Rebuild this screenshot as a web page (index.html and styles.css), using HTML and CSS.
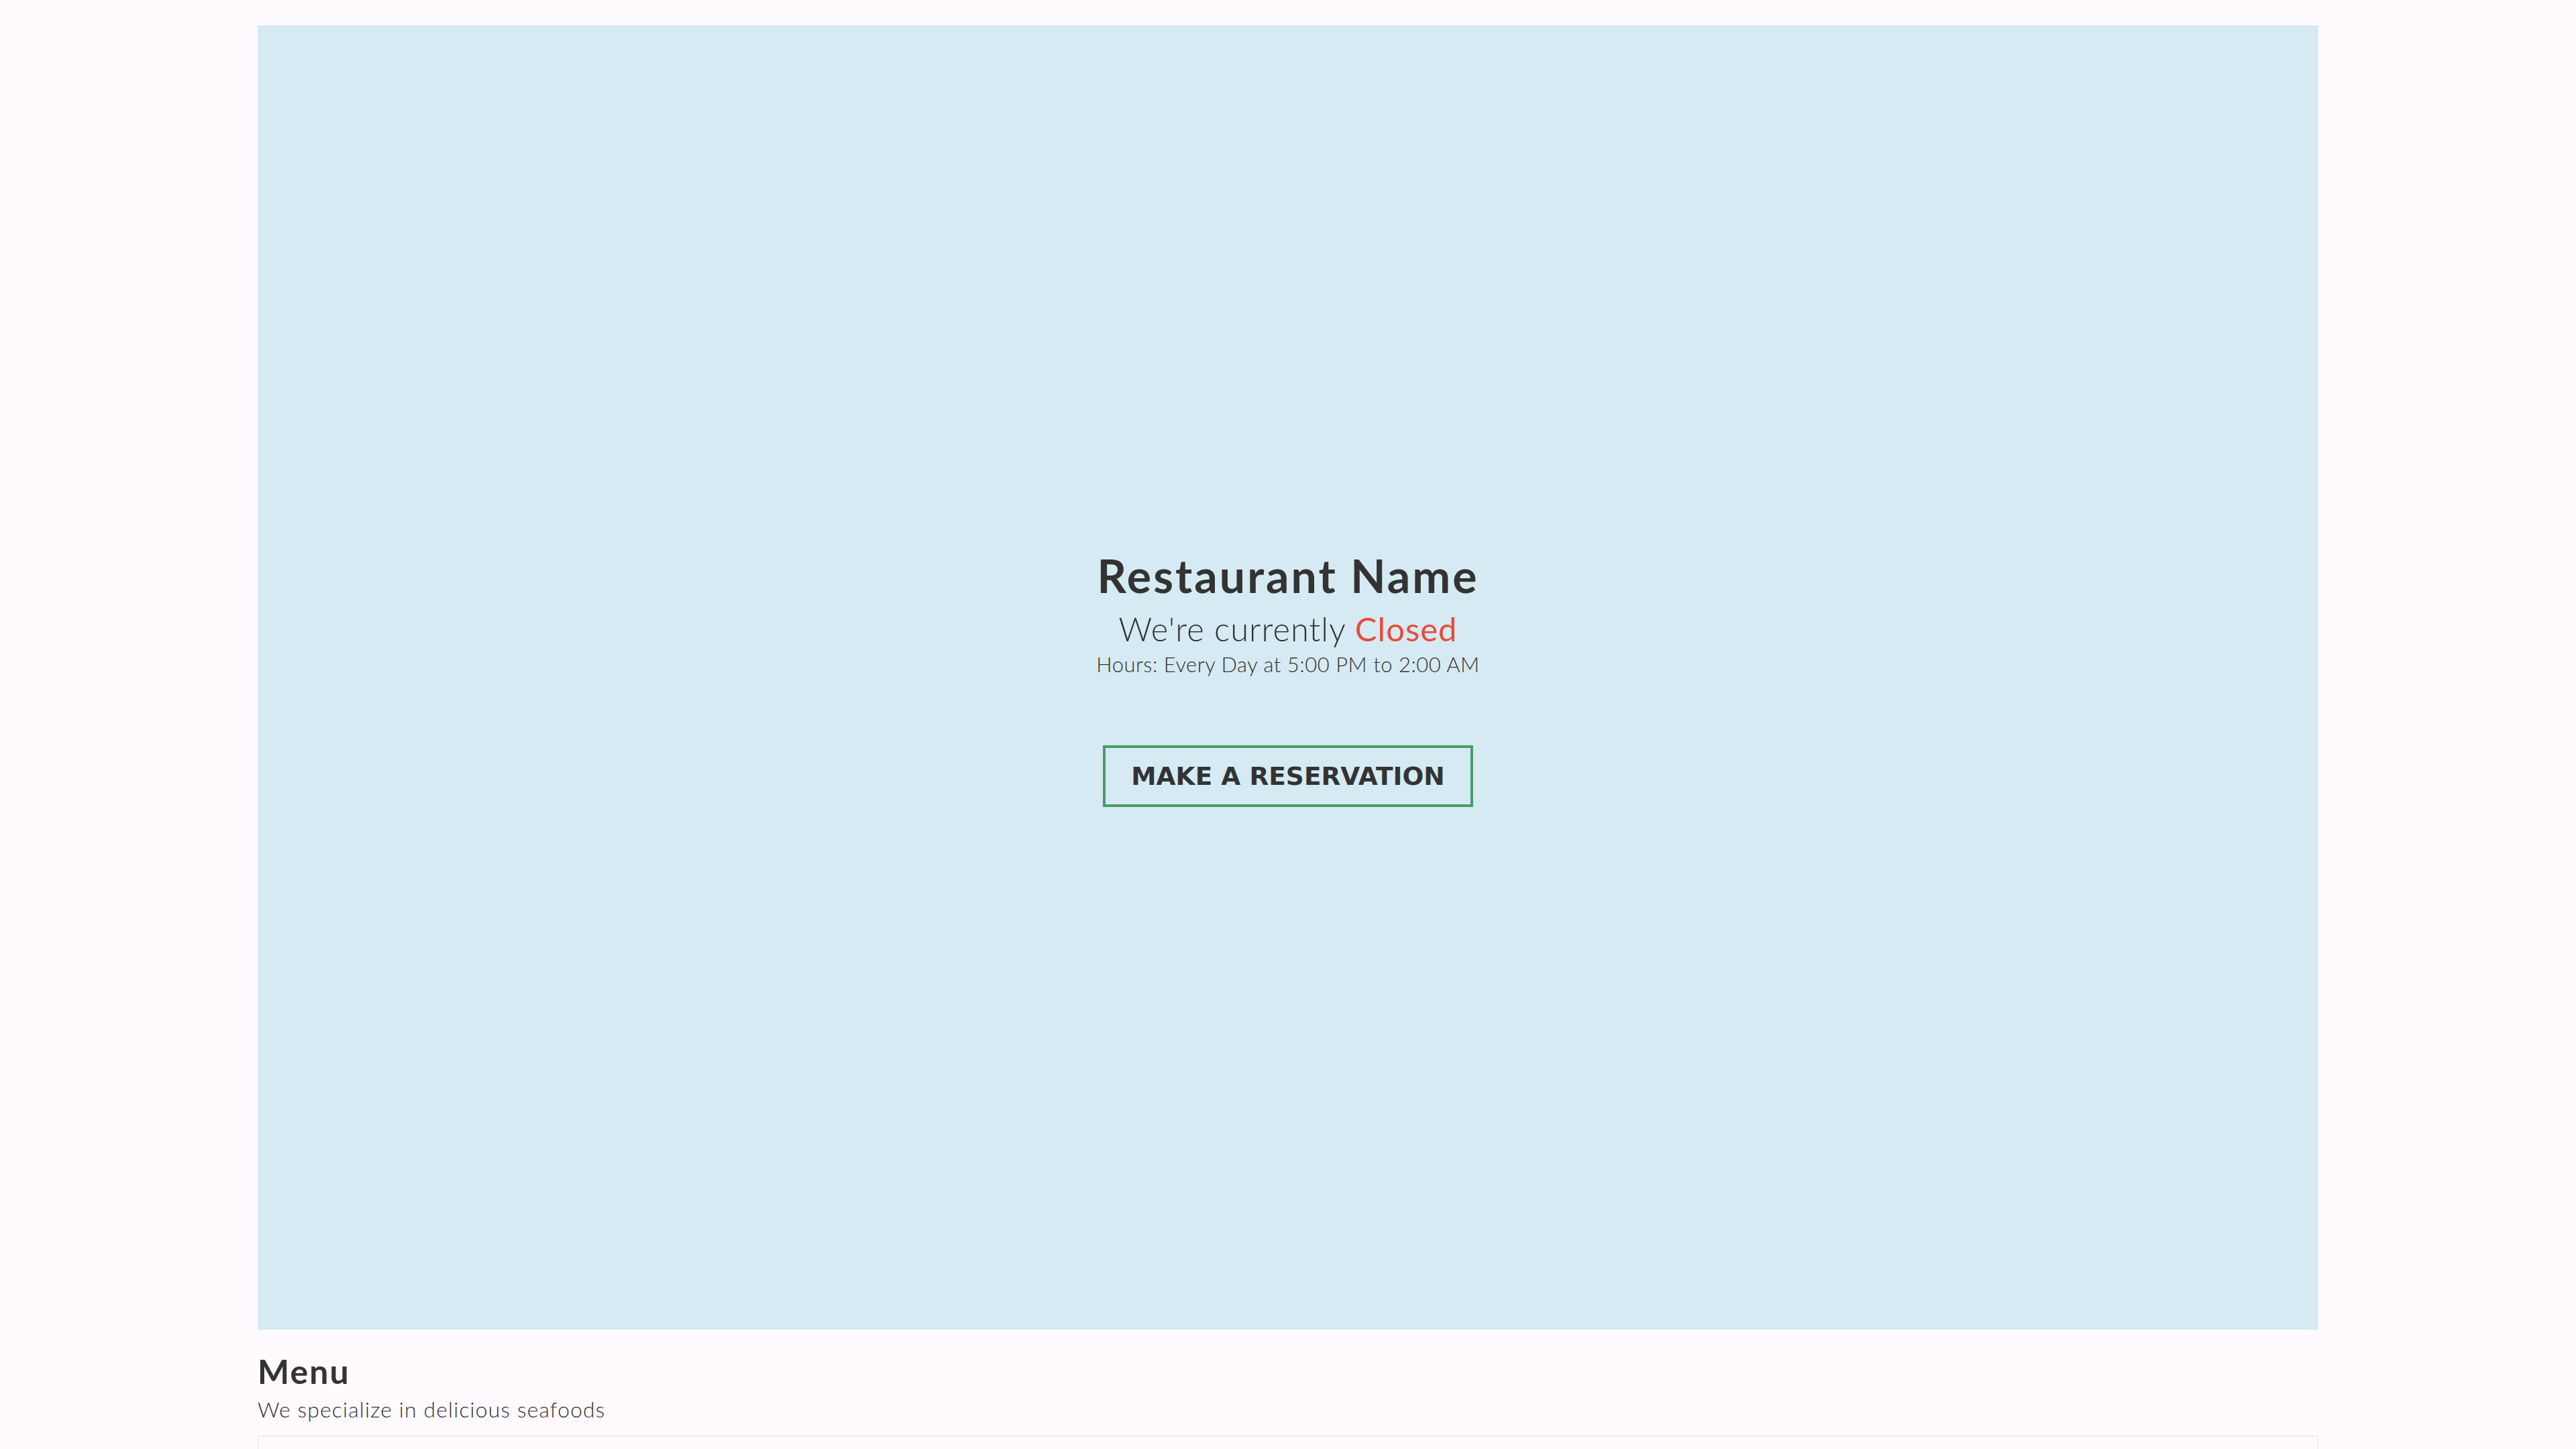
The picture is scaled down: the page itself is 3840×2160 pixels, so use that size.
FILE: index.html
```html
<!DOCTYPE html>
<html lang="en">
<head>
<meta charset="utf-8">
<title>Restaurant Name</title>
<link rel="stylesheet" href="styles.css">
</head>
<body>
<header class="hero">
  <div class="hero-content">
    <h1 class="hero-title">Restaurant Name</h1>
    <p class="hero-status">We're currently <span class="status-closed">Closed</span></p>
    <p class="hero-hours">Hours: Every Day at 5:00 PM to 2:00 AM</p>
    <button class="reserve-btn" type="button">MAKE A RESERVATION</button>
  </div>
</header>
<main class="menu-section">
  <h2 class="menu-title">Menu</h2>
  <p class="menu-sub">We specialize in delicious seafoods</p>
  <div class="menu-card"></div>
</main>
</body>
</html>
```
FILE: styles.css
```css
html, body {
  margin: 0;
  padding: 0;
}
body {
  background: #fefafe;
  color: #333333;
  font-family: "Lato", "Open Sans", "Liberation Sans", sans-serif;
  overflow: hidden;
}
.hero {
  width: 3072px;
  height: 1944px;
  margin: 38px auto 0;
  background: #d6eaf3;
  display: flex;
  align-items: center;
  justify-content: center;
}
.hero-content {
  display: flex;
  flex-direction: column;
  align-items: center;
  text-align: center;
  margin-top: 5px;
}
.hero-title {
  margin: 0;
  font-size: 68px;
  font-weight: 700;
  line-height: 72px;
  letter-spacing: 3px;
}
.hero-status {
  margin: 8px 0 0;
  font-size: 49px;
  font-weight: 300;
  line-height: 70px;
  letter-spacing: 1px;
}
.status-closed {
  color: #e74c3c;
  font-weight: 400;
}
.hero-hours {
  margin: -5px 0 0;
  font-size: 31px;
  font-weight: 300;
  line-height: 46px;
  letter-spacing: 0.5px;
}
.reserve-btn {
  margin-top: 98px;
  background: transparent;
  border: 4px solid #4a9b6a;
  color: #333333;
  font-family: "DejaVu Sans", sans-serif;
  font-weight: 700;
  font-size: 37.5px;
  line-height: 44px;
  padding: 20px 38px;
  cursor: pointer;
}
.menu-section {
  width: 3072px;
  margin: 0 auto;
  padding-top: 34px;
}
.menu-title {
  margin: 0;
  font-size: 50px;
  font-weight: 700;
  line-height: 56px;
  letter-spacing: 2px;
}
.menu-sub {
  margin: 5px 0 0;
  font-size: 32px;
  font-weight: 300;
  line-height: 48px;
  letter-spacing: 1.1px;
}
.menu-card {
  margin-top: 15px;
  height: 400px;
  border: 2px solid #f0eff1;
}
```
